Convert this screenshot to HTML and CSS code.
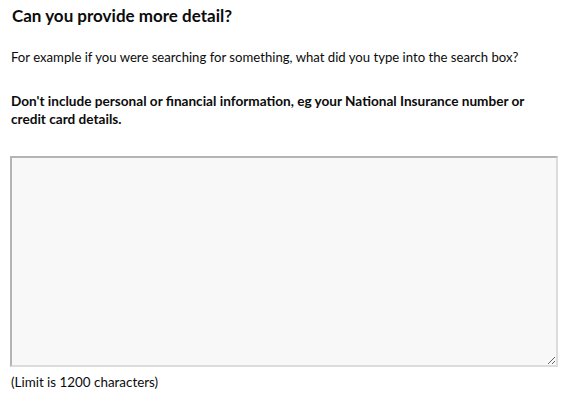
FILE: index.html
```html
<!DOCTYPE html>
<html lang="en">
<head>
<meta charset="utf-8">
<title>Feedback</title>
<link rel="stylesheet" href="styles.css">
</head>
<body>
<div class="page">
  <h1 class="title">Can you provide more detail?</h1>
  <p class="hint">For example if you were searching for something, what did you type into the search box?</p>
  <p class="warning">Don't include personal or financial information, eg your National Insurance number or credit card details.</p>
  <textarea class="detail" aria-label="More detail"></textarea>
  <p class="limit">(Limit is 1200 characters)</p>
</div>
</body>
</html>
```
FILE: styles.css
```css
html, body {
  margin: 0;
  padding: 0;
  background: #ffffff;
}
.page {
  font-family: Lato, "Noto Sans", sans-serif;
  color: #0b0c0c;
  padding: 5px 6px 0 11px;
  display: flex;
  flex-direction: column;
}
.title {
  margin: 0 0 0 1px;
  font-size: 17px;
  line-height: 22px;
  font-weight: 700;
}
.hint {
  margin: 21px 0 0 0;
  font-size: 13.15px;
  line-height: 18px;
}
.warning {
  margin: 26px 0 0 0;
  font-size: 13.6px;
  line-height: 18px;
  font-weight: 700;
}
.detail {
  margin: 28px 0 0 -1px;
  box-sizing: border-box;
  width: 548px;
  height: 211px;
  background: #f8f8f8;
  border-style: solid;
  border-width: 2px;
  border-color: #b4b4b4 #dcdcdc #dcdcdc #b4b4b4;
  resize: vertical;
  font-family: inherit;
}
.limit {
  margin: 6px 0 0 0;
  font-size: 13.4px;
  line-height: 18px;
}
```
